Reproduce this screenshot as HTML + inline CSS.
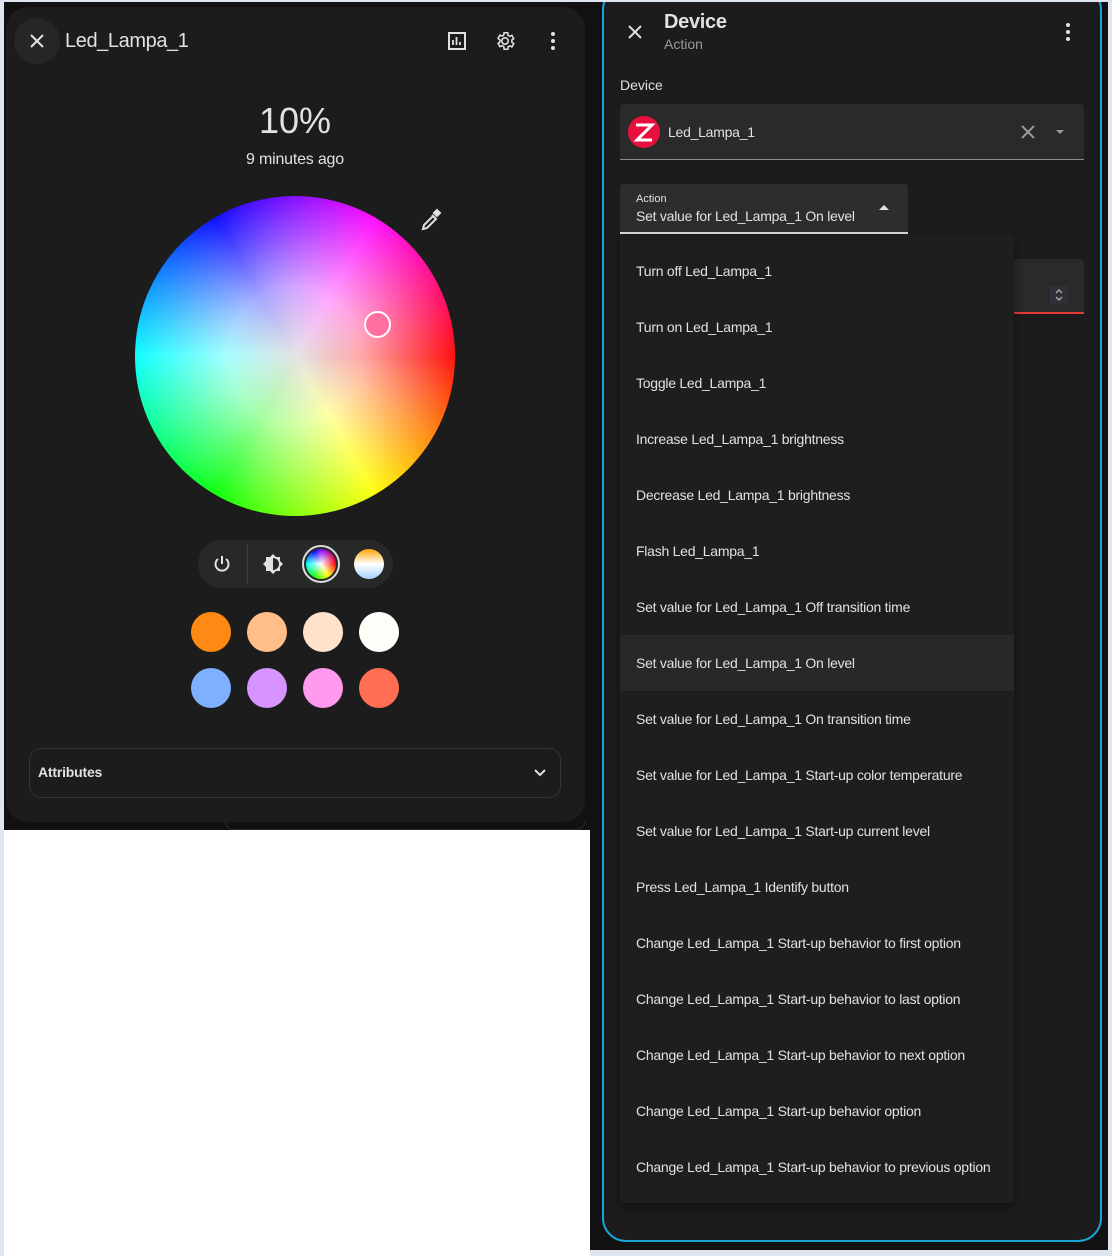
<!DOCTYPE html>
<html><head><meta charset="utf-8"><style>
*{box-sizing:border-box;margin:0;padding:0}
body{width:1112px;height:1256px;background:#dfe5ef;position:relative;overflow:hidden;font-family:"Liberation Sans",Roboto,sans-serif;color:#e1e1e1}
.abs{position:absolute}
.menuitem{position:absolute;left:0;width:394px;height:56px;line-height:56px;padding-left:16px;font-size:14px;color:#e1e1e1;letter-spacing:-0.25px}
</style></head><body>
<!-- left backdrop -->
<div class="abs" style="left:4px;top:2px;width:586px;height:828px;background:#111"></div>
<div class="abs" style="left:4px;top:830px;width:586px;height:426px;background:#fff"></div>
<div class="abs" style="left:225px;top:822px;width:360px;height:8px;border:1px solid #2a2a2a;border-top:none;border-radius:0 0 10px 10px"></div>
<!-- left card -->
<div class="abs" style="left:6px;top:7px;width:579px;height:815px;background:#1c1c1c;border-radius:22px"></div>
<div class="abs" style="left:14px;top:18px;width:46px;height:46px;border-radius:50%;background:#262626"></div>
<svg class="abs" style="left:27px;top:31px" width="20" height="20" viewBox="0 0 20 20"><path d="M4 4L16 16M16 4L4 16" stroke="#e1e1e1" stroke-width="2"/></svg>
<div class="abs" style="left:65px;top:30px;font-size:20px;color:#e1e1e1;letter-spacing:-0.4px">Led_Lampa_1</div>
<svg class="abs" style="left:447px;top:31px" width="20" height="20" viewBox="0 0 20 20"><rect x="2" y="2" width="16" height="16" fill="none" stroke="#e1e1e1" stroke-width="2"/><path d="M6 14V9M9.5 14V6M13 14v-3" stroke="#e1e1e1" stroke-width="1.8"/></svg>
<svg class="abs" style="left:494px;top:30px" width="22" height="22" viewBox="0 0 24 24"><path d="M12 15.5A3.5 3.5 0 1 1 12 8.5a3.5 3.5 0 0 1 0 7zm7.4-2.5a7.8 7.8 0 0 0 0-2l2.1-1.6-2-3.5-2.5 1a7 7 0 0 0-1.7-1L15 3h-4l-.4 2.6a7 7 0 0 0-1.7 1l-2.5-1-2 3.5L6.6 11a7.8 7.8 0 0 0 0 2l-2.1 1.6 2 3.5 2.5-1a7 7 0 0 0 1.7 1L11 21h4l.4-2.6a7 7 0 0 0 1.7-1l2.5 1 2-3.5z" fill="none" stroke="#e1e1e1" stroke-width="1.7"/></svg>
<svg class="abs" style="left:543px;top:31px" width="20" height="20" viewBox="0 0 20 20"><circle cx="10" cy="3" r="2" fill="#e1e1e1"/><circle cx="10" cy="10" r="2" fill="#e1e1e1"/><circle cx="10" cy="17" r="2" fill="#e1e1e1"/></svg>
<div class="abs" style="left:0;width:590px;top:100px;text-align:center;font-size:36px;color:#e1e1e1">10%</div>
<div class="abs" style="left:0;width:590px;top:151px;text-align:center;font-size:16px;color:#e1e1e1;letter-spacing:-0.2px">9 minutes ago</div>
<!-- wheel -->
<div class="abs" style="left:135px;top:196px;width:320px;height:320px;border-radius:50%;background:conic-gradient(hsl(270,100%,50%),hsl(300,100%,50%) 30deg,hsl(330,100%,50%) 60deg,hsl(360,100%,50%) 90deg,hsl(30,100%,50%) 120deg,hsl(60,100%,50%) 150deg,hsl(90,100%,50%) 180deg,hsl(120,100%,50%) 210deg,hsl(150,100%,50%) 240deg,hsl(180,100%,50%) 270deg,hsl(210,100%,50%) 300deg,hsl(240,100%,50%) 330deg,hsl(270,100%,50%))"></div>
<div class="abs" style="left:135px;top:196px;width:320px;height:320px;border-radius:50%;background:radial-gradient(circle,rgba(228,228,228,1) 0%,rgba(255,255,255,.65) 30%,rgba(255,255,255,0) 75%)"></div>
<div class="abs" style="left:364px;top:311px;width:27px;height:27px;border-radius:50%;border:2px solid #fff;background:#ff6fa0"></div>
<svg class="abs" style="left:420px;top:208px" width="22" height="24" viewBox="0 0 22 24"><path d="M3 21l1-4 9-9 3 3-9 9z" fill="none" stroke="#e1e1e1" stroke-width="2"/><path d="M12 7l4 4M14 5l3 3 3-3-3-3z" stroke="#e1e1e1" stroke-width="2" fill="#e1e1e1"/></svg>
<!-- mode bar -->
<div class="abs" style="left:198px;top:540px;width:195px;height:48px;border-radius:24px;background:#272828"></div>
<div class="abs" style="left:247px;top:544px;width:1px;height:40px;background:#3e3e3e"></div>
<svg class="abs" style="left:212px;top:554px" width="20" height="20" viewBox="0 0 20 20"><path d="M10 2v8" stroke="#e1e1e1" stroke-width="2"/><path d="M6 5a6.5 6.5 0 1 0 8 0" fill="none" stroke="#e1e1e1" stroke-width="2"/></svg>
<svg class="abs" style="left:261px;top:552px" width="24" height="24" viewBox="0 0 24 24"><path d="M12 2l3 3h4v4l3 3-3 3v4h-4l-3 3-3-3H5v-4l-3-3 3-3V5h4z" fill="#e1e1e1"/><path d="M12 6a6 6 0 0 1 0 12z" fill="#272828"/></svg>
<div class="abs" style="left:302px;top:545px;width:38px;height:38px;border-radius:50%;border:2px solid #ddd"></div>
<div class="abs" style="left:306px;top:549px;width:30px;height:30px;border-radius:50%;background:conic-gradient(hsl(270,100%,50%),red 90deg,yellow 150deg,lime 210deg,cyan 270deg,blue 330deg,hsl(270,100%,50%))"></div>
<div class="abs" style="left:306px;top:549px;width:30px;height:30px;border-radius:50%;background:radial-gradient(circle,#fff 0%,rgba(255,255,255,0) 70%)"></div>
<div class="abs" style="left:354px;top:549px;width:30px;height:30px;border-radius:50%;background:linear-gradient(#ffa500,#fff 50%,#a6d1ff)"></div>
<!-- swatches -->
<div class="abs" style="left:191px;top:612px;width:40px;height:40px;border-radius:50%;background:#ff8a13"></div>
<div class="abs" style="left:247px;top:612px;width:40px;height:40px;border-radius:50%;background:#ffbe8a"></div>
<div class="abs" style="left:303px;top:612px;width:40px;height:40px;border-radius:50%;background:#ffe2cc"></div>
<div class="abs" style="left:359px;top:612px;width:40px;height:40px;border-radius:50%;background:#fffffa"></div>
<div class="abs" style="left:191px;top:668px;width:40px;height:40px;border-radius:50%;background:#7fb0ff"></div>
<div class="abs" style="left:247px;top:668px;width:40px;height:40px;border-radius:50%;background:#d794ff"></div>
<div class="abs" style="left:303px;top:668px;width:40px;height:40px;border-radius:50%;background:#ff9aef"></div>
<div class="abs" style="left:359px;top:668px;width:40px;height:40px;border-radius:50%;background:#ff6e55"></div>
<!-- attributes -->
<div class="abs" style="left:29px;top:748px;width:532px;height:50px;border:1px solid #333;border-radius:12px"></div>
<div class="abs" style="left:38px;top:764px;font-size:14px;font-weight:bold;color:#e1e1e1;letter-spacing:-0.2px">Attributes</div>
<svg class="abs" style="left:532px;top:766px" width="16" height="14" viewBox="0 0 16 14"><path d="M3 4l5 5 5-5" fill="none" stroke="#e1e1e1" stroke-width="2"/></svg>
<!-- right backdrop -->
<div class="abs" style="left:590px;top:0;width:518px;height:1250px;background:#111"></div>
<div class="abs" style="left:602px;top:-14px;width:500px;height:1256px;background:#1c1c1c;border:2px solid #1aa3d6;border-radius:24px"></div>
<div class="abs" style="left:590px;top:0;width:522px;height:2px;background:#dfe5ef"></div>
<svg class="abs" style="left:626px;top:23px" width="18" height="18" viewBox="0 0 18 18"><path d="M3 3L15 15M15 3L3 15" stroke="#e1e1e1" stroke-width="2"/></svg>
<div class="abs" style="left:664px;top:11px;font-size:20px;font-weight:bold;color:#e1e1e1;letter-spacing:-0.3px">Device</div>
<div class="abs" style="left:664px;top:36px;font-size:14px;color:#9a9a9a">Action</div>
<svg class="abs" style="left:1058px;top:22px" width="20" height="20" viewBox="0 0 20 20"><circle cx="10" cy="3" r="2" fill="#e1e1e1"/><circle cx="10" cy="10" r="2" fill="#e1e1e1"/><circle cx="10" cy="17" r="2" fill="#e1e1e1"/></svg>
<div class="abs" style="left:620px;top:77px;font-size:14px;color:#e1e1e1">Device</div>
<div class="abs" style="left:620px;top:104px;width:464px;height:56px;background:#2a2a2a;border-radius:4px 4px 0 0;border-bottom:1px solid #8a8a8a"></div>
<svg class="abs" style="left:627px;top:115px" width="34" height="34" viewBox="0 0 34 34"><circle cx="17" cy="17" r="16" fill="#e8103f"/><path d="M9 10h16L10 25h15" fill="none" stroke="#fff" stroke-width="3"/></svg>
<div class="abs" style="left:668px;top:124px;font-size:14px;color:#e1e1e1;letter-spacing:-0.25px">Led_Lampa_1</div>
<svg class="abs" style="left:1020px;top:124px" width="16" height="16" viewBox="0 0 16 16"><path d="M2 2L14 14M14 2L2 14" stroke="#9a9a9a" stroke-width="2"/></svg>
<svg class="abs" style="left:1054px;top:128px" width="12" height="8" viewBox="0 0 12 8"><path d="M2 2h8l-4 4z" fill="#9a9a9a"/></svg>
<div class="abs" style="left:620px;top:184px;width:288px;height:50px;background:#2d2d2d;border-radius:4px 4px 0 0;border-bottom:2px solid #ddd"></div>
<div class="abs" style="left:636px;top:193px;font-size:11px;color:#e1e1e1">Action</div>
<div class="abs" style="left:636px;top:208px;font-size:14px;color:#e1e1e1;letter-spacing:-0.25px">Set value for Led_Lampa_1 On level</div>
<svg class="abs" style="left:877px;top:204px" width="14" height="8" viewBox="0 0 14 8"><path d="M2 6h10L7 1z" fill="#e1e1e1"/></svg>
<div class="abs" style="left:1014px;top:259px;width:70px;height:55px;background:#2a2a2a;border-radius:0 4px 0 0;border-bottom:2px solid #e53935"></div>
<div class="abs" style="left:1050px;top:286px;width:18px;height:18px;background:#2f2f37"></div>
<svg class="abs" style="left:1052px;top:287px" width="14" height="16" viewBox="0 0 14 16"><path d="M4 6l3-3 3 3M4 10l3 3 3-3" fill="none" stroke="#aaa" stroke-width="1.4"/></svg>
<!-- menu -->
<div class="abs" style="left:620px;top:235px;width:394px;height:968px;background:#1e1e1e;border-radius:0 0 4px 4px;box-shadow:0 4px 10px rgba(0,0,0,.4)">
<div class="menuitem" style="top:8px">Turn off Led_Lampa_1</div>
<div class="menuitem" style="top:64px">Turn on Led_Lampa_1</div>
<div class="menuitem" style="top:120px">Toggle Led_Lampa_1</div>
<div class="menuitem" style="top:176px">Increase Led_Lampa_1 brightness</div>
<div class="menuitem" style="top:232px">Decrease Led_Lampa_1 brightness</div>
<div class="menuitem" style="top:288px">Flash Led_Lampa_1</div>
<div class="menuitem" style="top:344px">Set value for Led_Lampa_1 Off transition time</div>
<div class="menuitem" style="top:400px;background:#282828">Set value for Led_Lampa_1 On level</div>
<div class="menuitem" style="top:456px">Set value for Led_Lampa_1 On transition time</div>
<div class="menuitem" style="top:512px">Set value for Led_Lampa_1 Start-up color temperature</div>
<div class="menuitem" style="top:568px">Set value for Led_Lampa_1 Start-up current level</div>
<div class="menuitem" style="top:624px">Press Led_Lampa_1 Identify button</div>
<div class="menuitem" style="top:680px">Change Led_Lampa_1 Start-up behavior to first option</div>
<div class="menuitem" style="top:736px">Change Led_Lampa_1 Start-up behavior to last option</div>
<div class="menuitem" style="top:792px">Change Led_Lampa_1 Start-up behavior to next option</div>
<div class="menuitem" style="top:848px">Change Led_Lampa_1 Start-up behavior option</div>
<div class="menuitem" style="top:904px">Change Led_Lampa_1 Start-up behavior to previous option</div>
</div>
</body></html>
